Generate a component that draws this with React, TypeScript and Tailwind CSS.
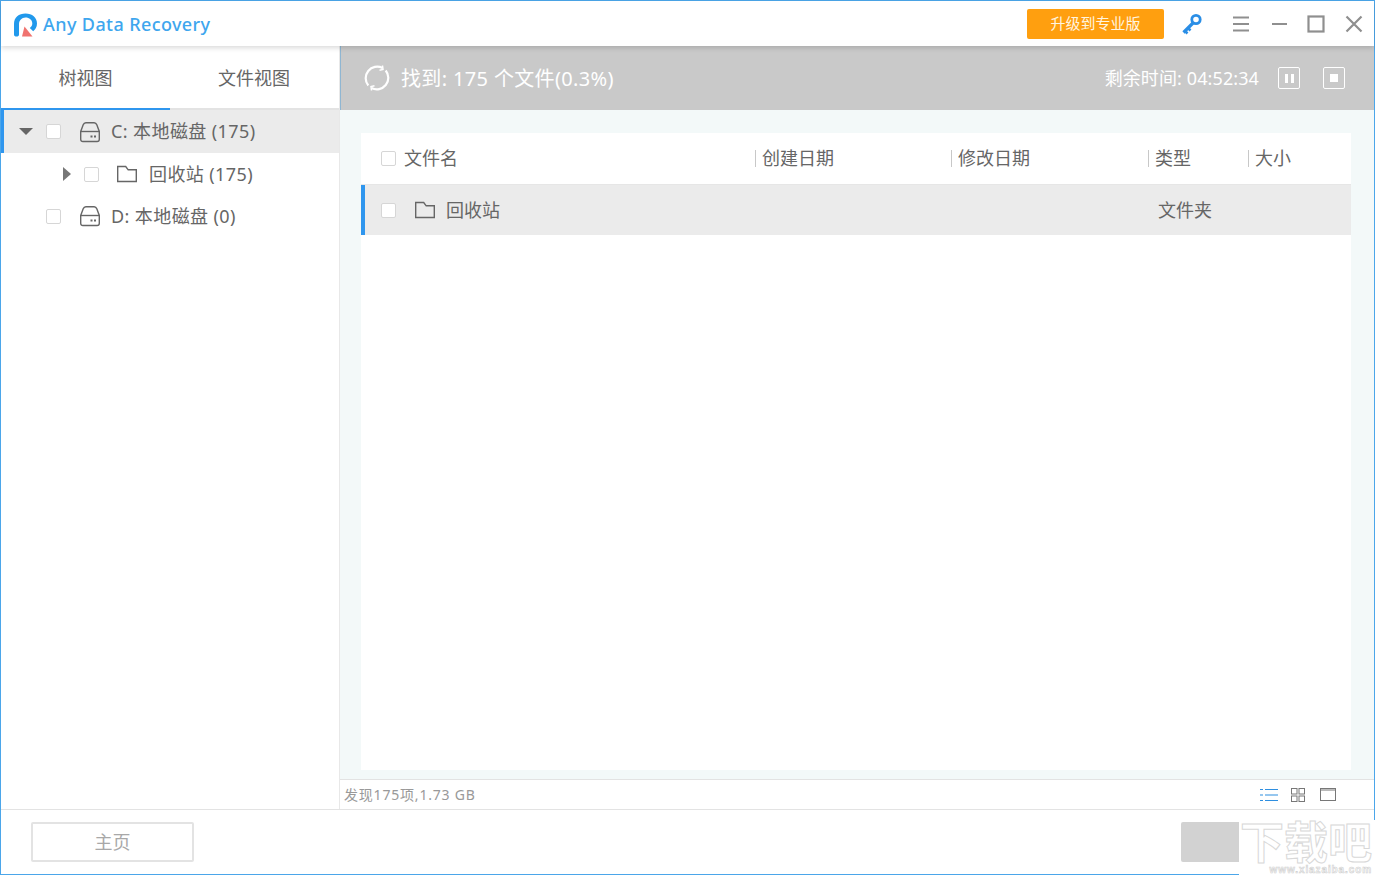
import React from "react";

const Check = ({ className = "" }: { className?: string }) => (
  <span className={`block h-[15px] w-[15px] shrink-0 rounded-[2px] border border-[#d6d6d6] bg-white ${className}`} />
);

const Disk = () => (
  <svg width="22" height="22" viewBox="0 0 22 22" fill="none" stroke="#666" strokeWidth="1.4" className="shrink-0">
    <path d="M1.7 10.5 4.2 3.8C4.7 2.500 5.500 1.700 6.800 1.700h8.400c1.300 0 2.100.8 2.600 2.100l2.500 6.700v7.800c0 1.300-.9 2.200-2.200 2.200H3.900c-1.300 0-2.200-.9-2.200-2.200z" />
    <path d="M1.700 10.500h18.600" />
    <path d="M11.500 15.500h2M15 15.500h2" strokeWidth="1.800" />
  </svg>
);

const Folder = () => (
  <svg width="22" height="18" viewBox="0 0 22 18" fill="none" stroke="#666" strokeWidth="1.4" className="shrink-0">
    <path d="M1.700 16.500V1.500h8l2.500 3.300h8.100v11.700z" />
  </svg>
);

const Logo = () => (
  <svg width="25" height="26" viewBox="0 0 25 26" className="shrink-0">
    <path d="M1 23.500V13C1 6.500 5.800 2.500 12.500 2.500S24 6.500 24 12.500c0 3.500-1.600 6-3.800 7.800l-3.400-3.400c1.600-1 2.500-2.600 2.500-4.400 0-3.500-3-6-6.800-6S6 9.500 6 13v10.500C6 25 5 25.500 3.500 25.500S1 25 1 23.500z" fill="#2199ec" />
    <path d="M9 25.500 11.500 15.500 19.500 25.500z" fill="#f0736f" />
  </svg>
);

function TreeRow({
  label,
  active,
  arrow,
  indent,
}: {
  label: string;
  active?: boolean;
  arrow?: "down" | "right";
  indent?: boolean;
}) {
  return (
    <div
      className={`flex items-center text-[18px] tracking-[0.4px] text-[#666] ${
        active ? "h-[43px] border-l-[3px] border-[#2f96ee] bg-[#ebebeb] pl-[15px]" : "h-[42px] pl-[18px]"
      }`}
    >
      {indent ? (
        <>
          <span className="ml-[44px] h-0 w-0 border-y-[7px] border-l-[8px] border-y-transparent border-l-[#777]" />
          <Check className="ml-[13px]" />
          <span className="ml-[17px] flex"><Folder /></span>
          <span className="ml-[11px]">{label}</span>
        </>
      ) : (
        <>
          <span className="w-[14px]">
            {arrow === "down" && (
              <span className="block h-0 w-0 border-x-[7px] border-t-[7px] border-x-transparent border-t-[#666]" />
            )}
          </span>
          <Check className="ml-[13px]" />
          <span className="ml-[18px] flex"><Disk /></span>
          <span className="ml-[10px]">{label}</span>
        </>
      )}
    </div>
  );
}

const HeaderCell = ({ label, className }: { label: string; className: string }) => (
  <div className={`flex items-center ${className}`}>
    <span className="h-[17px] w-px bg-[#c8c8c8]" />
    <span className="ml-[6px]">{label}</span>
  </div>
);

export default function App() {
  return (
    <div className="relative h-[875px] w-[1375px] overflow-hidden bg-white font-['Noto_Sans','Noto_Sans_CJK_SC',sans-serif] text-[#666]">
      <div className="flex h-full flex-col border border-[#4ba6ea]">
        {/* title bar */}
        <div className="relative z-10 flex h-[45px] shrink-0 items-center bg-white pl-[12px] pr-[11px] shadow-[0_2px_5px_rgba(0,0,0,0.15)]">
          <Logo />
          <span className="ml-[5px] pt-[1px] text-[18px] font-medium tracking-[0.4px] text-[#3ea6ee]">Any Data Recovery</span>
          <button className="ml-auto h-[30px] w-[137px] rounded-[2px] bg-[#ff9f0f] text-[15px] text-[#fff5e0]">升级到专业版</button>
          <svg width="24" height="24" viewBox="0 0 24 24" className="ml-[16px]" fill="none" stroke="#2a8ee6">
            <circle cx="16" cy="7.5" r="4.2" strokeWidth="2.8" />
            <path d="M13 11 3.500 20.500" strokeWidth="3.2" />
            <path d="M5 19l2.500 2.500M8 16l2.500 2.500" strokeWidth="2.600" />
          </svg>
          <svg width="18" height="18" viewBox="0 0 18 18" className="ml-[28px]" stroke="#8f8f8f" strokeWidth="2.2">
            <path d="M1 2.500h16M1 9h16M1 15.500h16" />
          </svg>
          <svg width="18" height="18" viewBox="0 0 18 18" className="ml-[20px]" stroke="#8f8f8f" strokeWidth="2">
            <path d="M2 9h15" />
          </svg>
          <svg width="18" height="18" viewBox="0 0 18 18" className="ml-[19px]" fill="none" stroke="#8f8f8f" strokeWidth="2.2">
            <rect x="1.5" y="1.5" width="15" height="15" />
          </svg>
          <svg width="18" height="18" viewBox="0 0 18 18" className="ml-[20px]" stroke="#8f8f8f" strokeWidth="2.2">
            <path d="M1.500 1.500l15 15M16.500 1.500l-15 15" />
          </svg>
        </div>

        {/* main */}
        <div className="flex min-h-0 flex-1">
          <aside className="flex w-[339px] shrink-0 flex-col border-r border-[#e8e8e8] bg-white">
            <div className="flex h-[64px] shrink-0 text-[18px]">
              <div className="flex w-[169px] items-center justify-center border-b-[2px] border-[#2f96ee] pt-[3px]">树视图</div>
              <div className="flex flex-1 items-center justify-center border-b-[2px] border-[#e3e3e3] pr-[1px] pt-[3px]">文件视图</div>
            </div>
            <TreeRow label="C: 本地磁盘 (175)" active arrow="down" />
            <TreeRow label="回收站 (175)" indent />
            <TreeRow label="D: 本地磁盘 (0)" />
          </aside>

          <section className="flex min-w-0 flex-1 flex-col">
            <div className="flex h-[64px] shrink-0 items-center border-l border-[#8fb6d2] bg-[#c9c9c9] pl-[22px] pr-[29px] text-white">
              <svg width="28" height="28" viewBox="0 0 28 28" fill="none" stroke="#fff" strokeWidth="2.2">
                <path d="M5.300 21.500A11.500 11.500 0 0 1 19.500 4" />
                <path d="M22.700 6.500A11.500 11.500 0 0 1 8.500 24" />
                <path d="M19.500 1.500 20 5.500l-3.500.8M8.500 26.500 8 22.500l3.500-.8" strokeWidth="1.5" />
              </svg>
              <span className="ml-[10px] pt-[1px] text-[20px] tracking-[0.35px]">找到: 175 个文件(0.3%)</span>
              <span className="ml-auto text-[18px] tracking-[0.1px]">剩余时间: 04:52:34</span>
              <span className="ml-[19px] flex h-[22px] w-[22px] items-center justify-center gap-[3px] rounded-[2px] border border-white">
                <span className="h-[9px] w-[3px] bg-white" />
                <span className="h-[9px] w-[3px] bg-white" />
              </span>
              <span className="ml-[23px] flex h-[22px] w-[22px] items-center justify-center rounded-[2px] border border-white">
                <span className="h-[8px] w-[8px] bg-white" />
              </span>
            </div>

            <div className="flex min-h-0 flex-1 flex-col bg-[#f3f9f9] pb-[9px] pl-[21px] pr-[23px] pt-[23px]">
              <div className="flex flex-1 flex-col bg-white">
                <div className="flex h-[52px] shrink-0 items-center border-b border-[#e6e6e6] text-[18px]">
                  <div className="flex w-[394px] items-center pl-[20px]">
                    <Check />
                    <span className="ml-[8px]">文件名</span>
                  </div>
                  <HeaderCell label="创建日期" className="w-[196px]" />
                  <HeaderCell label="修改日期" className="w-[197px]" />
                  <HeaderCell label="类型" className="w-[100px]" />
                  <HeaderCell label="大小" className="flex-1" />
                </div>
                <div className="flex h-[50px] shrink-0 items-center border-l-[4px] border-[#2f96ee] bg-[#ebebeb] text-[18px]">
                  <div className="flex w-[793px] items-center pl-[16px]">
                    <Check />
                    <span className="ml-[18px] flex"><Folder /></span>
                    <span className="ml-[10px]">回收站</span>
                  </div>
                  <span>文件夹</span>
                </div>
              </div>
            </div>

            <div className="flex h-[30px] shrink-0 items-center border-t border-[#e3e3e3] bg-white pl-[4px] pr-[38px] text-[14px] tracking-[0.8px] text-[#999]">
              <span>发现175项,1.73 GB</span>
              <svg width="18" height="14" viewBox="0 0 18 14" className="ml-auto" stroke="#2f8fe0" strokeWidth="1.2">
                <path d="M0 1.500h3M5 1.500h13M0 7h3M5 7h13M0 12.500h3M5 12.500h13" />
              </svg>
              <svg width="14" height="14" viewBox="0 0 14 14" className="ml-[13px]" fill="none" stroke="#777">
                <rect x=".5" y=".5" width="5.5" height="5.5" />
                <rect x="8" y=".5" width="5.5" height="5.5" />
                <rect x=".5" y="8" width="5.5" height="5.5" />
                <rect x="8" y="8" width="5.5" height="5.5" />
              </svg>
              <svg width="16" height="13" viewBox="0 0 16 13" className="ml-[15px]" fill="none" stroke="#777">
                <rect x=".5" y=".5" width="15" height="12" />
                <path d="M.5 2h15" />
              </svg>
            </div>
          </section>
        </div>

        {/* bottom bar */}
        <div className="flex h-[65px] shrink-0 items-center justify-between border-t border-[#e3e3e3] bg-white pl-[30px] pr-[56px]">
          <button className="h-[40px] w-[163px] rounded-[2px] border-[2px] border-[#e3e3e3] text-[18px] text-[#a8a8a8]">主页</button>
          <div className="h-[40px] w-[137px] rounded-[2px] bg-[#d2d2d2]" />
        </div>
      </div>

      {/* watermark */}
      <div className="absolute bottom-0 right-0 flex h-[55px] w-[136px] flex-col items-end whitespace-nowrap bg-white pr-[3px]">
        <span className="text-[44px] font-bold leading-[44px] text-white [-webkit-text-stroke:1px_#d8d8d8]">下载吧</span>
        <span className="font-['Liberation_Sans',sans-serif] text-[10px] font-bold leading-[11px] tracking-[0.9px] text-white [-webkit-text-stroke:0.6px_#cfcfcf]">www.xiazaiba.com</span>
      </div>
    </div>
  );
}
